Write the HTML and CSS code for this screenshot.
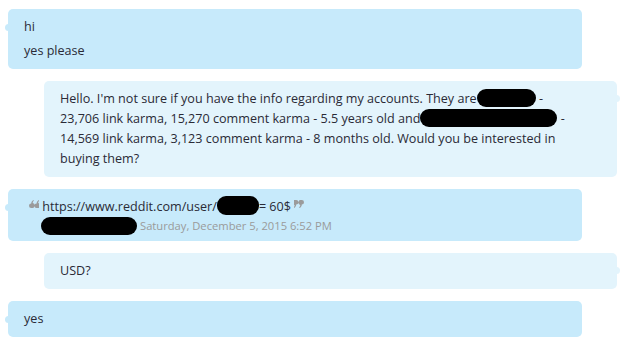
FILE: index.html
```html
<!DOCTYPE html>
<html>
<head>
<meta charset="utf-8">
<link rel="stylesheet" href="styles.css">
</head>
<body>
<div class="chat">
  <div class="bubble in">
    <p class="msg">hi</p>
    <p class="msg">yes please</p>
  </div>
  <div class="bubble out">
    <p class="msg">Hello. I'm not sure if you have the info regarding my accounts. They are<span class="redact r1"></span> -<br>23,706 link karma, 15,270 comment karma - 5.5 years old and<span class="redact r2"></span> -<br>14,569 link karma, 3,123 comment karma - 8 months old. Would you be interested in<br>buying them?</p>
  </div>
  <div class="bubble in quote">
    <p class="msg qline"><svg class="qmark" width="10" height="8" viewBox="0 0 10 8"><path d="M2.2 8a2.2 2.2 0 1 1 0-4.4c0-1.6 .9-2.8 2.2-3.6l.5 .7c-.9 .6-1.1 1.3-1.1 2.3A2.2 2.2 0 0 1 2.2 8zM7.6 8a2.2 2.2 0 1 1 0-4.4c0-1.6 .9-2.8 2.2-3.6l.5 .7c-.9 .6-1.1 1.3-1.1 2.3A2.2 2.2 0 0 1 7.6 8z" fill="#9b9b9b"/></svg> https://www.reddit.com/user/<span class="redact r3"></span>= 60$ <svg class="qmark" width="11" height="8" viewBox="0 0 11 8"><path d="M2.2 0a2.2 2.2 0 1 1 0 4.4c0 1.6-.9 2.8-2.2 3.6l-.5-.7c.9-.6 1.1-1.3 1.1-2.3A2.2 2.2 0 0 1 2.2 0zM7.8 0a2.2 2.2 0 1 1 0 4.4c0 1.6-.9 2.8-2.2 3.6l-.5-.7c.9-.6 1.1-1.3 1.1-2.3A2.2 2.2 0 0 1 7.8 0z" fill="#9b9b9b"/></svg></p>
    <p class="meta"><span class="redact r4"></span><span class="stamp">Saturday, December 5, 2015 6:52 PM</span></p>
  </div>
  <div class="bubble out">
    <p class="msg">USD?</p>
  </div>
  <div class="bubble in">
    <p class="msg">yes</p>
  </div>
  <div class="bubble out last"></div>
</div>
</body>
</html>
```
FILE: styles.css
```css
html, body {
  margin: 0;
  padding: 0;
  background: #ffffff;
}
body {
  font-family: "Open Sans", "Noto Sans", sans-serif;
  font-size: 12.6px;
  color: #2a2a36;
}
.chat {
  display: flex;
  flex-direction: column;
  gap: 12px;
  padding-top: 9px;
}
.bubble {
  position: relative;
  border-radius: 5px;
  padding: 8px 16px;
  box-sizing: border-box;
  display: flex;
  flex-direction: column;
  gap: 4px;
}
.bubble.in {
  background: #c7eafb;
  margin-left: 8px;
  width: 574px;
}
.bubble.out {
  background: #e3f4fc;
  margin-left: 44px;
  width: 573px;
}
.bubble.in::before {
  content: "";
  position: absolute;
  left: -3px;
  top: 15px;
  width: 7px;
  height: 7px;
  border-radius: 50%;
  background: #c7eafb;
}
.bubble.out::after {
  content: "";
  position: absolute;
  right: -3px;
  top: 14px;
  width: 7px;
  height: 7px;
  border-radius: 50%;
  background: #e3f4fc;
}
.bubble.last {
  height: 10px;
  padding: 0;
  margin-left: 46px;
  width: 569px;
}
.bubble.last::after { display: none; }
.msg {
  margin: 0;
  line-height: 20px;
}
.redact {
  display: inline-block;
  background: #000;
  border-radius: 9px;
  height: 18px;
  vertical-align: -4px;
}
.r1 { width: 59px; }
.r2 { width: 137px; }
.r3 { width: 42px; height: 19px; }
.r4 { width: 96px; flex: none; }
.quote {
  padding: 7px 16px 7px 21px;
  gap: 0;
}
.qmark {
  vertical-align: 3px;
}
.meta {
  margin: 0;
  padding-left: 12px;
  height: 17px;
  line-height: 17px;
  display: flex;
  align-items: center;
  gap: 3px;
}
.stamp {
  font-size: 11.2px;
  color: #9a9a9a;
}
```
